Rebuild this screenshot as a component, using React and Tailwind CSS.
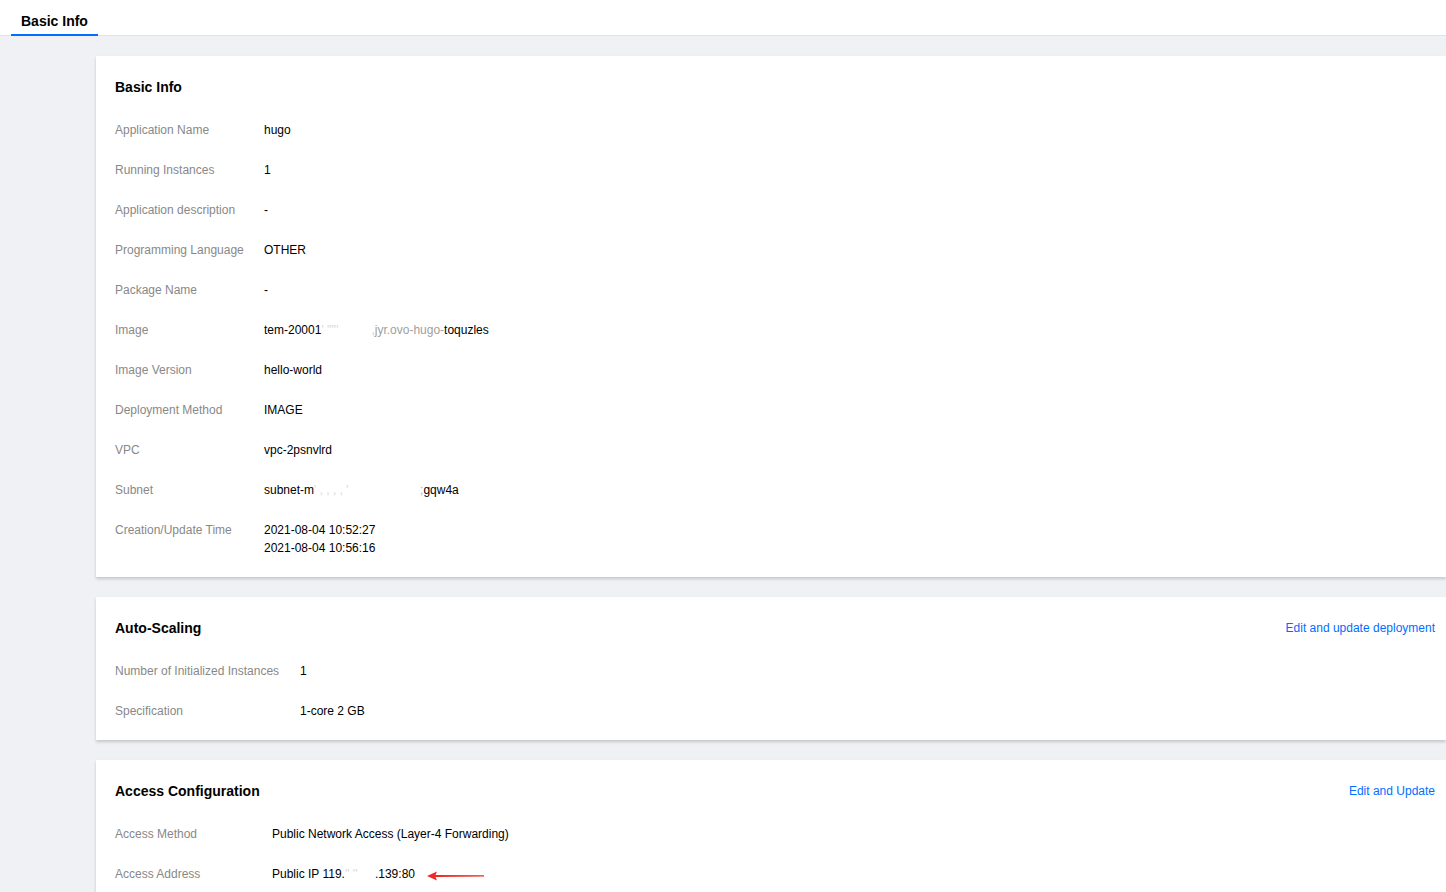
import React from "react";

const font = { fontFamily: '"Liberation Sans", Arial, Helvetica, sans-serif' };

function Row({ label, labelW, children }) {
  return (
    <div className="flex py-[11px] text-[12px] leading-[18px]">
      <div className="shrink-0 text-[#888888]" style={{ width: labelW }}>{label}</div>
      <div className="text-[#000000]">{children}</div>
    </div>
  );
}

function Card({ title, action, children }) {
  return (
    <div className="bg-white pt-5 pb-[9px] pl-[19px] pr-[11px] shadow-[0_2px_3px_0_rgba(0,0,0,0.18)]">
      <div className="flex items-center justify-between h-[22px]">
        <div className="text-[14px] font-bold leading-[22px] text-black">{title}</div>
        {action && <a className="text-[12px] text-[#006eff] leading-[18px] cursor-pointer">{action}</a>}
      </div>
      <div className="mt-[12px]">{children}</div>
    </div>
  );
}

function Faint({ w, text }) {
  return (
    <span className="inline-block overflow-hidden align-top whitespace-nowrap text-[#d8d8d8]" style={{ width: w }}>{text}</span>
  );
}

export default function App() {
  return (
    <div className="min-h-[892px] bg-[#f0f1f5]" style={font}>
      <div className="h-9 bg-white border-b border-[#e2e3e7] flex items-end pl-[11px]">
        <div className="px-[10px] h-9 pt-[12px] leading-[18px] border-b-2 border-[#006eff] -mb-px text-[14px] font-bold text-black">Basic Info</div>
      </div>
      <div className="pl-[96px] pt-5 flex flex-col gap-5">
        <Card title="Basic Info">
          <Row label="Application Name" labelW={149}>hugo</Row>
          <Row label="Running Instances" labelW={149}>1</Row>
          <Row label="Application description" labelW={149}>-</Row>
          <Row label="Programming Language" labelW={149}>OTHER</Row>
          <Row label="Package Name" labelW={149}>-</Row>
          <Row label="Image" labelW={149}>
            <span className="whitespace-nowrap">tem-20001<Faint w={50} text="' '''''" /><span className="text-[#c8c8c8]">,</span><span className="text-[#a0a0a0]">jyr.ovo-hugo-</span>toquzles</span>
          </Row>
          <Row label="Image Version" labelW={149}>hello-world</Row>
          <Row label="Deployment Method" labelW={149}>IMAGE</Row>
          <Row label="VPC" labelW={149}>vpc-2psnvlrd</Row>
          <Row label="Subnet" labelW={149}>
            <span className="whitespace-nowrap">subnet-m<Faint w={106} text="'  ,   ,     ,   ,   '" /><span className="text-[#aaa]">;</span>gqw4a</span>
          </Row>
          <Row label="Creation/Update Time" labelW={149}>
            <div>2021-08-04 10:52:27</div>
            <div>2021-08-04 10:56:16</div>
          </Row>
        </Card>
        <Card title="Auto-Scaling" action="Edit and update deployment">
          <Row label="Number of Initialized Instances" labelW={185}>1</Row>
          <Row label="Specification" labelW={185}>1-core 2 GB</Row>
        </Card>
        <Card title="Access Configuration" action="Edit and Update">
          <Row label="Access Method" labelW={157}>Public Network Access (Layer-4 Forwarding)</Row>
          <Row label="Access Address" labelW={157}>
            <span className="inline-flex items-center whitespace-nowrap">
              <span>Public IP 119.<Faint w={30} text="'' ''" />.139:80</span>
              <svg width="58" height="10" viewBox="0 0 58 10" className="ml-[12px] mt-[3px]">
                <path d="M0 5 L10 0.6 L8.5 4 L57 4.2 L57 5.4 L8.5 6 L10 9.4 Z" fill="#ee2a22" />
              </svg>
            </span>
          </Row>
        </Card>
      </div>
    </div>
  );
}
